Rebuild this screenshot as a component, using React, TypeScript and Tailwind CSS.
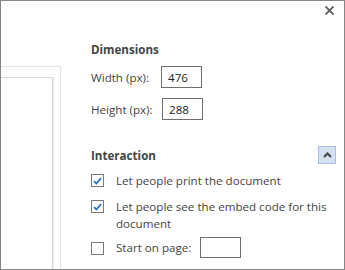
import React from "react";

function Check({ checked }: { checked: boolean }) {
  return (
    <span className="mt-[2px] flex h-[13px] w-[13px] shrink-0 items-center justify-center border border-[#7a7a7a] bg-white">
      {checked && (
        <svg width="9" height="8" viewBox="0 0 9 8">
          <path d="M1 4.2 L3.4 6.5 L8 1.2" fill="none" stroke="#2b73c4" strokeWidth="1.8" />
        </svg>
      )}
    </span>
  );
}

function Field({ label, value, labelWidth }: { label: string; value: string; labelWidth: string }) {
  return (
    <div className="flex items-center">
      <span className={labelWidth}>{label}</span>
      <div className="flex h-[22px] w-[41px] items-center border border-[#6e6e6e] pl-[6px] text-[#222]">{value}</div>
    </div>
  );
}

export default function App() {
  return (
    <div
      className="relative flex h-[270px] w-[345px] overflow-hidden border border-[#858585] bg-white text-[11.6px] leading-[17px] text-[#444]"
      style={{ fontFamily: '"Open Sans", "Noto Sans", sans-serif' }}
    >
      {/* close */}
      <button className="absolute right-[9px] top-[4px] p-[1px]">
        <svg width="9" height="9" viewBox="0 0 9 9">
          <path d="M0.5 0.5 L8.5 8.5 M8.5 0.5 L0.5 8.5" stroke="#5e5e5e" strokeWidth="1.9" />
        </svg>
      </button>

      {/* document preview */}
      <div className="w-[90px] shrink-0 pt-[65px]">
        <div className="h-full w-[60px] border-r border-t border-[#e4e4e4] pt-[10px]">
          <div className="h-full w-[52px] border-r border-t border-[#d6d6d6] shadow-[1px_1px_0_#ececec]" />
        </div>
      </div>

      {/* settings */}
      <div className="flex-1 pr-[8px] pt-[40px]">
        <h3 className="font-bold text-[#444]">Dimensions</h3>
        <div className="mt-[8px] flex flex-col gap-[10px]">
          <Field label="Width (px):" value="476" labelWidth="w-[70px]" />
          <Field label="Height (px):" value="288" labelWidth="w-[71px]" />
        </div>

        <div className="mt-[26px] flex h-[18px] items-center justify-between">
          <h3 className="font-bold">Interaction</h3>
          <button className="flex h-[18px] w-[18px] items-center justify-center border border-[#a6bfe2] bg-[#d5e1f2]">
            <svg width="9" height="6" viewBox="0 0 9 6">
              <path d="M1 5 L4.5 1.5 L8 5" fill="none" stroke="#4a4a4a" strokeWidth="2.2" />
            </svg>
          </button>
        </div>

        <div className="mt-[8px] flex gap-[12px]">
          <Check checked />
          <span>Let people print the document</span>
        </div>
        <div className="mt-[9px] flex gap-[12px]">
          <Check checked />
          <span>Let people see the embed code for this document</span>
        </div>
        <div className="mt-[5px] flex items-center gap-[12px]">
          <Check checked={false} />
          <span className="flex items-center">
            <span className="w-[84px]">Start on page:</span>
            <span className="h-[21px] w-[41px] border border-[#6e6e6e]" />
          </span>
        </div>
      </div>
    </div>
  );
}
